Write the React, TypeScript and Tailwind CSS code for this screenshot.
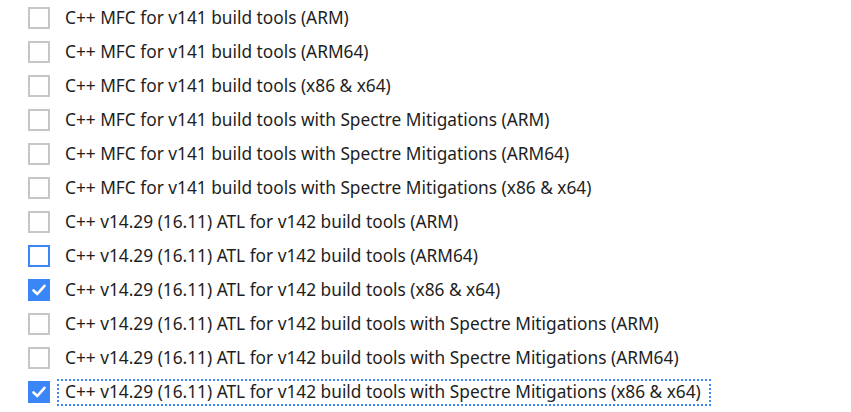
import React from "react";

type Item = { label: string; state: "off" | "hover" | "on"; focus?: boolean };

const items: Item[] = [
  { label: "C++ MFC for v141 build tools (ARM)", state: "off" },
  { label: "C++ MFC for v141 build tools (ARM64)", state: "off" },
  { label: "C++ MFC for v141 build tools (x86 & x64)", state: "off" },
  { label: "C++ MFC for v141 build tools with Spectre Mitigations (ARM)", state: "off" },
  { label: "C++ MFC for v141 build tools with Spectre Mitigations (ARM64)", state: "off" },
  { label: "C++ MFC for v141 build tools with Spectre Mitigations (x86 & x64)", state: "off" },
  { label: "C++ v14.29 (16.11) ATL for v142 build tools (ARM)", state: "off" },
  { label: "C++ v14.29 (16.11) ATL for v142 build tools (ARM64)", state: "hover" },
  { label: "C++ v14.29 (16.11) ATL for v142 build tools (x86 & x64)", state: "on" },
  { label: "C++ v14.29 (16.11) ATL for v142 build tools with Spectre Mitigations (ARM)", state: "off" },
  { label: "C++ v14.29 (16.11) ATL for v142 build tools with Spectre Mitigations (ARM64)", state: "off" },
  { label: "C++ v14.29 (16.11) ATL for v142 build tools with Spectre Mitigations (x86 & x64)", state: "on", focus: true },
];

function Box({ state }: { state: Item["state"] }) {
  if (state === "on") {
    return (
      <div className="w-[22px] h-[22px] bg-[#3a86f6] flex items-center justify-center shrink-0">
        <svg width="16" height="16" viewBox="0 0 16 16">
          <path d="M2.5 8.5 L6.3 12 L13.5 3.8" fill="none" stroke="white" strokeWidth="2.6" strokeLinecap="round" strokeLinejoin="round" />
        </svg>
      </div>
    );
  }
  return (
    <div
      className={
        "w-[22px] h-[22px] border-2 bg-white shrink-0 " +
        (state === "hover" ? "border-[#3a86f6]" : "border-[#c6c6c6]")
      }
    />
  );
}

export default function App() {
  return (
    <div
      className="w-[851px] h-[412px] bg-white overflow-hidden pt-[1px]"
      style={{ fontFamily: '"Noto Sans", "Open Sans", sans-serif' }}
    >
      {items.map((it, i) => (
        <div key={i} className="h-[34px] flex items-center pl-[28px]">
          <Box state={it.state} />
          <div
            className={
              "ml-[7px] h-[27px] flex items-center pl-[6px] pr-[8px] text-[17.3px] text-[#1e1e1e] border-2 " +
              (it.focus ? "border-dotted border-[#3a86f6]" : "border-transparent")
            }
          >
            {it.label}
          </div>
        </div>
      ))}
    </div>
  );
}
